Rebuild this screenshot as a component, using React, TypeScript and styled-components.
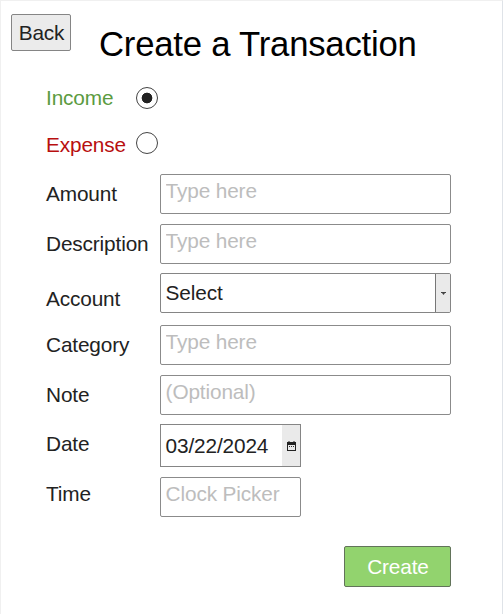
import React from "react";
import styled, { createGlobalStyle } from "styled-components";

const GlobalStyle = createGlobalStyle`
  * { box-sizing: border-box; }
  body { margin: 0; background: #fff; overflow: hidden; }
`;

const Page = styled.main`
  width: 503px;
  height: 614px;
  display: flex;
  flex-direction: column;
  border: 1px solid #f0f0f0;
  border-right-color: #dfe3e8;
  border-bottom: 0;
  background: #fff;
  color: #222;
  font: 20.8px/24px "Liberation Sans", Arial, sans-serif;
  letter-spacing: -0.14px;
`;

const Header = styled.header`
  display: flex;
  height: 72px;
  padding: 13px 0 0 10px;
`;

const BackButton = styled.button`
  width: 60px;
  height: 37px;
  padding: 1px 0 0 1px;
  border: 1px solid #858585;
  border-radius: 2px;
  background: #ebebeb;
  color: #222;
  font: inherit;
  letter-spacing: inherit;
`;

const Title = styled.h1`
  margin: 10px 0 0 28px;
  color: #000;
  font-size: 34.7px;
  line-height: 40px;
  font-weight: 400;
  letter-spacing: -0.22px;
  white-space: nowrap;
`;

const Form = styled.form`
  display: flex;
  flex-direction: column;
  padding: 0 51px 0 45px;
`;

const Choice = styled.label<{ $tone: string; $drop: number }>`
  display: grid;
  grid-template-columns: 90px 23px;
  height: 46px;
  padding-top: ${(p) => p.$drop}px;
  color: ${(p) => p.$tone};
`;

const Radio = styled.input<{ $top: number }>`
  appearance: none;
  width: 22px;
  height: 22px;
  margin: ${(p) => p.$top}px 0 0 0.4px;
  border: 1px solid #444;
  border-radius: 50%;
  background: #fff;
  &:checked {
    background: radial-gradient(circle, #222 0 5px, #fff 5.7px);
  }
`;

const Fields = styled.div`
  margin-top: 9px;
`;

const Row = styled.div<{ $height: number }>`
  display: grid;
  grid-template-columns: 114px 1fr;
  height: ${(p) => p.$height}px;
`;

const Label = styled.label<{ $drop: number }>`
  padding-top: ${(p) => p.$drop}px;
`;

const Field = styled.input<{ $width?: number }>`
  width: ${(p) => p.$width ?? 291}px;
  height: 40px;
  padding: 0 4.6px 6px;
  border: 1px solid #8b8b8b;
  border-radius: 2px;
  outline: 0;
  background: #fff;
  color: #222;
  font: inherit;
  letter-spacing: inherit;
  &::placeholder { color: #bdbdbd; opacity: 1; }
`;

const Picker = styled.div<{ $width: number; $height: number; $round: number }>`
  display: flex;
  width: ${(p) => p.$width}px;
  height: ${(p) => p.$height}px;
  border: 1px solid #858585;
  border-radius: ${(p) => p.$round}px;
  overflow: hidden;
`;

const PickerValue = styled.span<{ $drop: number }>`
  flex: 1;
  padding: ${(p) => p.$drop}px 0 0 4.6px;
  white-space: nowrap;
`;

const PickerButton = styled.button<{ $width: number; $divided?: boolean }>`
  display: flex;
  align-items: center;
  justify-content: center;
  width: ${(p) => p.$width}px;
  padding: 0;
  border: 0;
  border-left: ${(p) => (p.$divided ? "1px solid #777" : "0")};
  background: #eaeaea;
`;

const Actions = styled.div`
  display: flex;
  justify-content: flex-end;
  margin-top: 19px;
`;

const CreateButton = styled.button`
  width: 107px;
  height: 41px;
  padding: 1px 0 0 1px;
  border: 1px solid #62735a;
  border-radius: 2px;
  background: #92d36e;
  color: #fff;
  font: inherit;
  letter-spacing: inherit;
`;

function ArrowIcon() {
  return (
    <svg width="5" height="3" viewBox="0 0 5 3">
      <path d="M0 0h5v1H4L2.5 3 1 1H0z" fill="#444" />
    </svg>
  );
}

function CalendarIcon() {
  return (
    <svg width="9" height="10" viewBox="0 0 9 10">
      <path d="M0 1h1.5V0h1v1h4V0h1v1H9v9H0zM1 4v5h7V4z" fill="#222" fillRule="evenodd" />
      <path d="M2 5h1v1H2zM4 5h1v1H4zM6 5h1v1H6z" fill="#333" />
    </svg>
  );
}

export default function App() {
  return (
    <>
      <GlobalStyle />
      <Page>
        <Header>
          <BackButton type="button">Back</BackButton>
          <Title>Create a Transaction</Title>
        </Header>
        <Form onSubmit={(e: React.FormEvent) => e.preventDefault()}>
          <Choice $tone="#5b9b41" $drop={13}>
            Income
            <Radio type="radio" name="kind" $top={1} defaultChecked />
          </Choice>
          <Choice $tone="#b80f0f" $drop={14}>
            Expense
            <Radio type="radio" name="kind" $top={-1} />
          </Choice>
          <Fields>
            <Row $height={50}>
              <Label $drop={8} htmlFor="amount">Amount</Label>
              <Field id="amount" placeholder="Type here" />
            </Row>
            <Row $height={49}>
              <Label $drop={8} htmlFor="description">Description</Label>
              <Field id="description" placeholder="Type here" />
            </Row>
            <Row $height={52}>
              <Label $drop={14}>Account</Label>
              <Picker $width={291} $height={40} $round={2}>
                <PickerValue $drop={7}>Select</PickerValue>
                <PickerButton type="button" aria-label="Open accounts" $width={15} $divided>
                  <ArrowIcon />
                </PickerButton>
              </Picker>
            </Row>
            <Row $height={50}>
              <Label $drop={8} htmlFor="category">Category</Label>
              <Field id="category" placeholder="Type here" />
            </Row>
            <Row $height={49}>
              <Label $drop={8} htmlFor="note">Note</Label>
              <Field id="note" placeholder="(Optional)" />
            </Row>
            <Row $height={53}>
              <Label $drop={8}>Date</Label>
              <Picker $width={141} $height={43} $round={0}>
                <PickerValue $drop={9}>03/22/2024</PickerValue>
                <PickerButton type="button" aria-label="Open calendar" $width={18}>
                  <CalendarIcon />
                </PickerButton>
              </Picker>
            </Row>
            <Row $height={50}>
              <Label $drop={5} htmlFor="time">Time</Label>
              <Field id="time" $width={141} placeholder="Clock Picker" />
            </Row>
          </Fields>
          <Actions>
            <CreateButton>Create</CreateButton>
          </Actions>
        </Form>
      </Page>
    </>
  );
}
